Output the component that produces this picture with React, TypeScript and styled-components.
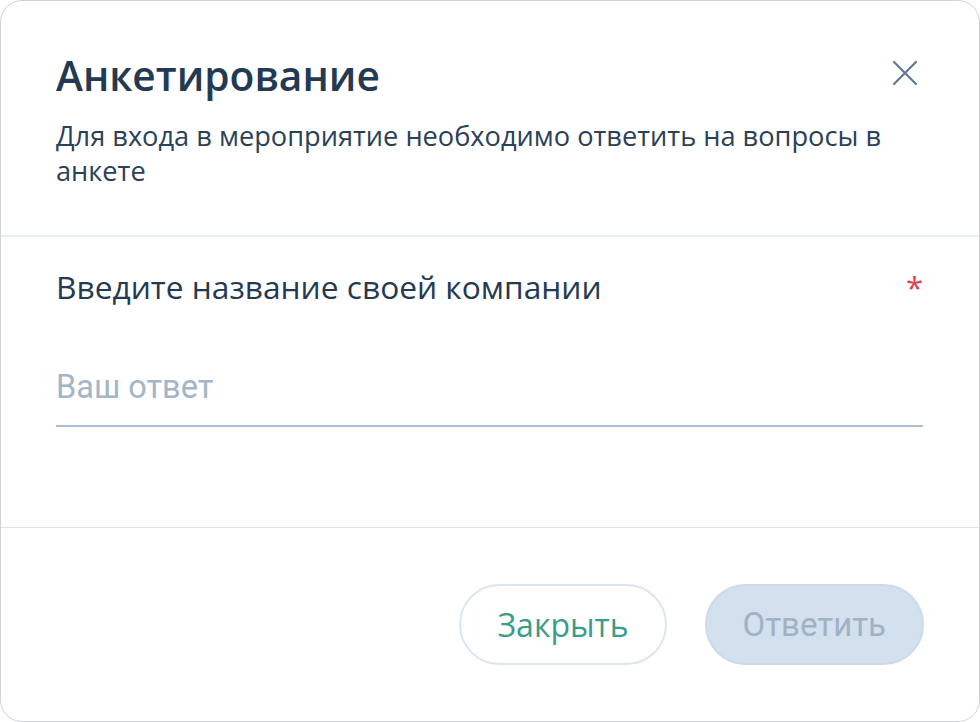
import React, { useState } from 'react';
import styled, { createGlobalStyle } from 'styled-components';

const Global = createGlobalStyle`
  html, body {
    margin: 0;
    padding: 0;
    background: #ffffff;
  }
  body {
    font-family: "Open Sans", "Liberation Sans", sans-serif;
  }
  * { box-sizing: border-box; }
`;

const Card = styled.div`
  width: 980px;
  height: 722px;
  border: 1px solid #cfd2d6;
  border-radius: 22px;
  background: #fff;
  display: flex;
  flex-direction: column;
  overflow: hidden;
`;

const Header = styled.div`
  padding: 46px 56px 0 55px;
  height: 236px;
  border-bottom: 2px solid #e6eef6;
`;

const TitleRow = styled.div`
  display: flex;
  align-items: center;
  justify-content: space-between;
`;

const Title = styled.h1`
  margin: 0;
  font-size: 40.7px;
  line-height: 56px;
  font-weight: 600;
  color: #233a52;
`;

const CloseBtn = styled.button`
  border: none;
  background: none;
  padding: 0;
  width: 28px;
  height: 28px;
  margin-right: 4px;
  margin-top: -4px;
  cursor: pointer;
  display: flex;
  align-items: center;
  justify-content: center;
`;

const Subtitle = styled.p`
  margin: 15px 0 0;
  font-size: 27.2px;
  line-height: 35px;
  color: #2a4157;
`;

const Body = styled.div`
  padding: 30px 56px 0 55px;
  height: 291px;
  border-bottom: 1px solid #e2e3e5;
`;

const LabelRow = styled.div`
  display: flex;
  justify-content: space-between;
  align-items: flex-start;
`;

const Label = styled.label`
  font-size: 31.7px;
  line-height: 40px;
  color: #233a52;
`;

const Required = styled.span`
  color: #e0414b;
  font-size: 31px;
  line-height: 40px;
  margin-right: 0;
`;

const Input = styled.input`
  display: block;
  width: 100%;
  margin-top: 62px;
  border: none;
  border-bottom: 2px solid #a9c0d6;
  outline: none;
  padding: 0 0 20px;
  font-family: Roboto, "Liberation Sans", sans-serif;
  font-size: 32.5px;
  line-height: 36px;
  color: #233a52;
  background: transparent;

  &::placeholder {
    color: #a3b5c8;
  }
`;

const Footer = styled.div`
  flex: 1;
  display: flex;
  justify-content: flex-end;
  align-items: flex-start;
  gap: 38px;
  padding: 56px 55px 0 0;
`;

const Button = styled.button<{ $primary?: boolean }>`
  height: 81px;
  padding: 0 36px;
  border-radius: 41px;
  font-size: ${(p) => (p.$primary ? '33px' : '32px')};
  font-family: ${(p) => (p.$primary ? 'Roboto, "Liberation Sans", sans-serif' : '"Open Sans", "Liberation Sans", sans-serif')};
  cursor: pointer;
  border: 2px solid ${(p) => (p.$primary ? '#cddbe8' : '#dce6f1')};
  background: ${(p) => (p.$primary ? '#d3e0ed' : '#ffffff')};
  color: ${(p) => (p.$primary ? '#a1b2c5' : '#3a9d88')};

  &:disabled {
    cursor: default;
  }
`;

export default function App() {
  const [answer, setAnswer] = useState('');

  return (
    <>
      <Global />
      <Card>
        <Header>
          <TitleRow>
            <Title>Анкетирование</Title>
            <CloseBtn aria-label="Закрыть">
              <svg width="26" height="26" viewBox="0 0 26 26" fill="none">
                <path d="M2 2L24 24M24 2L2 24" stroke="#5f7a93" strokeWidth="2.2" strokeLinecap="round" />
              </svg>
            </CloseBtn>
          </TitleRow>
          <Subtitle>Для входа в мероприятие необходимо ответить на вопросы в анкете</Subtitle>
        </Header>
        <Body>
          <LabelRow>
            <Label htmlFor="company">Введите название своей компании</Label>
            <Required>*</Required>
          </LabelRow>
          <Input
            id="company"
            placeholder="Ваш ответ"
            value={answer}
            onChange={(e) => setAnswer(e.target.value)}
          />
        </Body>
        <Footer>
          <Button>Закрыть</Button>
          <Button $primary disabled={!answer}>Ответить</Button>
        </Footer>
      </Card>
    </>
  );
}
